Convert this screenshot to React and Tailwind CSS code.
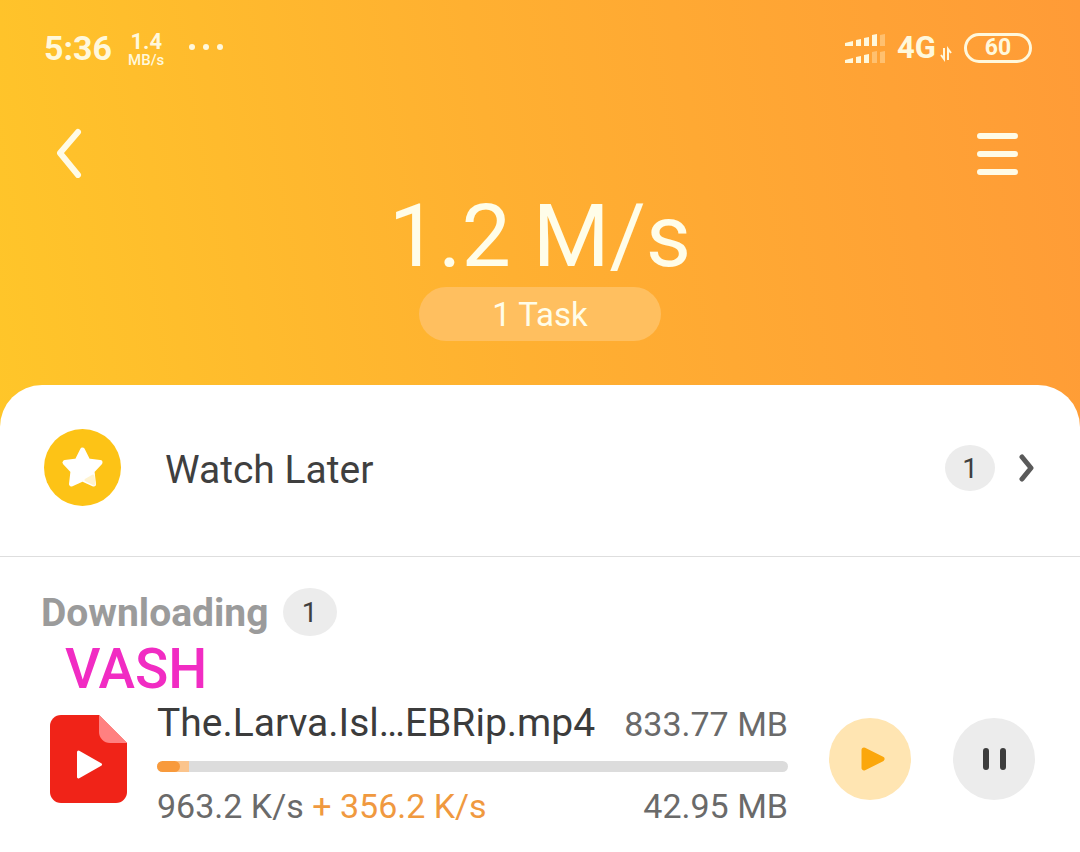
import React from 'react';

const SignalBars = ({ level, y }) => (
  <g transform={`translate(0 ${y})`}>
    {[5, 7, 9, 12, 12].map((h, i) => (
      <path
        key={i}
        d={i === 0 ? `M0 12V${14 - h}L8 ${12 - h}V12Z` : `M${3 + i * 8} ${13 - h}L${8 + i * 8} ${12 - h}V12H${3 + i * 8}Z`}
        fill="#fff8dc"
        opacity={i < level ? 1 : 0.35}
      />
    ))}
  </g>
);

const StatusBar = () => (
  <div className="flex h-24 items-center justify-between pr-12 pl-11 text-[#fff8dc]">
    <div className="flex items-center gap-4">
      <span className="text-[34px] leading-10 font-bold">5:36</span>
      <div className="flex flex-col items-center pt-1">
        <span className="text-[22px] leading-5 font-bold">1.4</span>
        <span className="text-[15px] leading-4 font-medium">MB/s</span>
      </div>
      <svg className="ml-2 h-2 w-9" viewBox="0 0 36 8" fill="currentColor" aria-hidden="true">
        <circle cx="4" cy="3" r="3" />
        <circle cx="18" cy="3" r="3" />
        <circle cx="32" cy="3" r="3" />
      </svg>
    </div>
    <div className="flex items-center gap-3">
      <svg className="h-8 w-10" viewBox="0 0 40 32" aria-hidden="true">
        <SignalBars level={4} y={2} />
        <SignalBars level={3} y={19} />
      </svg>
      <div className="flex items-end gap-1">
        <span className="text-[31px] leading-9 font-bold">4G</span>
        <svg className="mb-1 h-4 w-3" viewBox="0 0 12 16" fill="none" stroke="currentColor" strokeWidth="2" aria-hidden="true">
          <path d="M4 2v11L1 9" />
          <path d="M8 14V3L11 7" />
        </svg>
      </div>
      <span className="flex h-[30px] w-[68px] items-center justify-center rounded-full border-3 border-current text-[23px] leading-6 font-bold">
        60
      </span>
    </div>
  </div>
);

const CountBadge = ({ className, children }) => (
  <span className={`flex items-center justify-center rounded-[50%] bg-[#ececec] pt-[2px] text-[28px] leading-8 text-[#3f3f3f] ${className}`}>
    {children}
  </span>
);

const FileIcon = () => (
  <svg className="h-[88px] w-[77px] shrink-0" viewBox="0 0 77 88" aria-hidden="true">
    <path d="M11 0H49L77 28V77a11 11 0 0 1-11 11H11A11 11 0 0 1 0 77V11A11 11 0 0 1 11 0Z" fill="#f02318" />
    <path d="M49 0L77 28H60A11 11 0 0 1 49 17Z" fill="#ff8080" />
    <path d="M28.500 37L50.500 49.500L28.500 62Z" fill="#fff" stroke="#fff" strokeWidth="3" strokeLinejoin="round" />
  </svg>
);

const ProgressBar = ({ done, boosted }) => (
  <div className="relative mt-[11px] mb-[20px] h-[11px] overflow-hidden rounded-full bg-[#dcdcdc]">
    <div className="absolute inset-y-0 left-0 bg-[#fbc48c]" style={{ width: `${boosted}%` }} />
    <div className="absolute inset-y-0 left-0 rounded-full bg-[#f89a3c]" style={{ width: `${done}%` }} />
  </div>
);

const DownloadItem = ({ file }) => (
  <div className="flex items-center pr-[45px] pl-[50px]">
    <FileIcon />
    <div className="ml-[30px] min-w-0 flex-1">
      <div className="flex items-baseline justify-between leading-[51px]">
        <span className="truncate text-[39px] text-[#3c3c3c]">{file.name}</span>
        <span className="shrink-0 text-[34px] text-[#6a6a6a]">{file.size}</span>
      </div>
      <ProgressBar done={file.done} boosted={file.boosted} />
      <div className="flex items-baseline justify-between text-[34px] leading-7 text-[#6a6a6a]">
        <span>
          {file.speed} <span className="text-[#f0993f]">+ {file.boost}</span>
        </span>
        <span>{file.received}</span>
      </div>
    </div>
    <button type="button" aria-label="Play" className="ml-[41px] flex size-[82px] shrink-0 items-center justify-center rounded-full bg-[#ffe5b2]">
      <svg className="size-8" viewBox="0 0 32 32" aria-hidden="true">
        <path d="M10 7L28 16L10 25Z" fill="#fba70c" stroke="#fba70c" strokeWidth="5" strokeLinejoin="round" />
      </svg>
    </button>
    <button type="button" aria-label="Pause" className="ml-[42px] flex size-[82px] shrink-0 items-center justify-center rounded-full bg-[#ececec]">
      <svg className="size-8" viewBox="0 0 32 32" stroke="#3c3c3c" strokeWidth="6" strokeLinecap="round" aria-hidden="true">
        <path d="M8 8V24M25 8V24" />
      </svg>
    </button>
  </div>
);

const download = {
  name: 'The.Larva.Isl…EBRip.mp4',
  size: '833.77 MB',
  speed: '963.2 K/s',
  boost: '356.2 K/s',
  received: '42.95 MB',
  done: 3.6,
  boosted: 5.1,
};

export default function App() {
  return (
    <div className="flex min-h-screen flex-col bg-linear-[80deg,#ffc928,#ffb031_50%,#ff9b37] font-['Roboto',sans-serif]">
      <header className="pb-11">
        <StatusBar />
        <nav className="flex items-center justify-between pt-8 pr-[62px] pl-14 text-[#fffbe6]">
          <button type="button" aria-label="Back">
            <svg className="h-[50px] w-7" viewBox="0 0 28 50" fill="none" stroke="currentColor" strokeWidth="6" strokeLinecap="round" strokeLinejoin="round" aria-hidden="true">
              <path d="M22 4L4 25L22 47" />
            </svg>
          </button>
          <button type="button" aria-label="Menu">
            <svg className="h-[50px] w-[41px]" viewBox="0 0 41 50" stroke="currentColor" strokeWidth="6" strokeLinecap="round" aria-hidden="true">
              <path d="M3 8H38M3 26H38M3 44H38" />
            </svg>
          </button>
        </nav>
        <div className="mt-[14px] flex flex-col items-center text-[#fffde9]">
          <h1 className="text-[88px] leading-[88px]">1.2 M/s</h1>
          <p className="mt-[7px] flex h-[54px] w-[242px] items-center justify-center rounded-full bg-[#ffbf5f] pt-[2px] text-[33px] leading-10">
            1 Task
          </p>
        </div>
      </header>

      <main className="flex-1 rounded-t-[42px] bg-white">
        <a href="#watch-later" className="flex items-center border-b border-[#dedede] px-11 pt-11 pb-[50px]">
          <svg className="size-[77px] shrink-0" viewBox="0 0 77 77" aria-hidden="true">
            <circle cx="38.500" cy="38.500" r="38.500" fill="#fdc316" />
            <path
              d="M38.500 21L44 32L56 33.500L48 42L49.500 55L38.500 50L27.500 55L29 42L21 33.500L33 32Z"
              fill="#fff"
              stroke="#fff"
              strokeWidth="5"
              strokeLinejoin="round"
            />
            <path d="M42 51L49 47L50 55Z" fill="#fff3cf" stroke="#fff3cf" strokeWidth="3" strokeLinejoin="round" />
          </svg>
          <span className="ml-11 flex-1 pt-1 text-[39px] leading-[46px] text-[#3f3f3f]">Watch Later</span>
          <CountBadge className="h-[46px] w-[50px]">1</CountBadge>
          <svg className="ml-6 h-8 w-[17px]" viewBox="0 0 17 32" fill="none" stroke="#5a5a5a" strokeWidth="5" strokeLinecap="round" strokeLinejoin="round" aria-hidden="true">
            <path d="M3 5L12 16L3 27" />
          </svg>
        </a>

        <section className="pt-[31px]">
          <div className="flex items-center gap-[14px] px-[41px]">
            <h2 className="pt-[2px] text-[39px] leading-[46px] font-bold text-[#9b9b9b]">Downloading</h2>
            <CountBadge className="h-12 w-[54px]">1</CountBadge>
          </div>
          <p className="mt-1 px-[65px] text-[55px] leading-[58px] font-medium text-[#f12cc3]">VASH</p>
          <DownloadItem file={download} />
        </section>
      </main>
    </div>
  );
}
